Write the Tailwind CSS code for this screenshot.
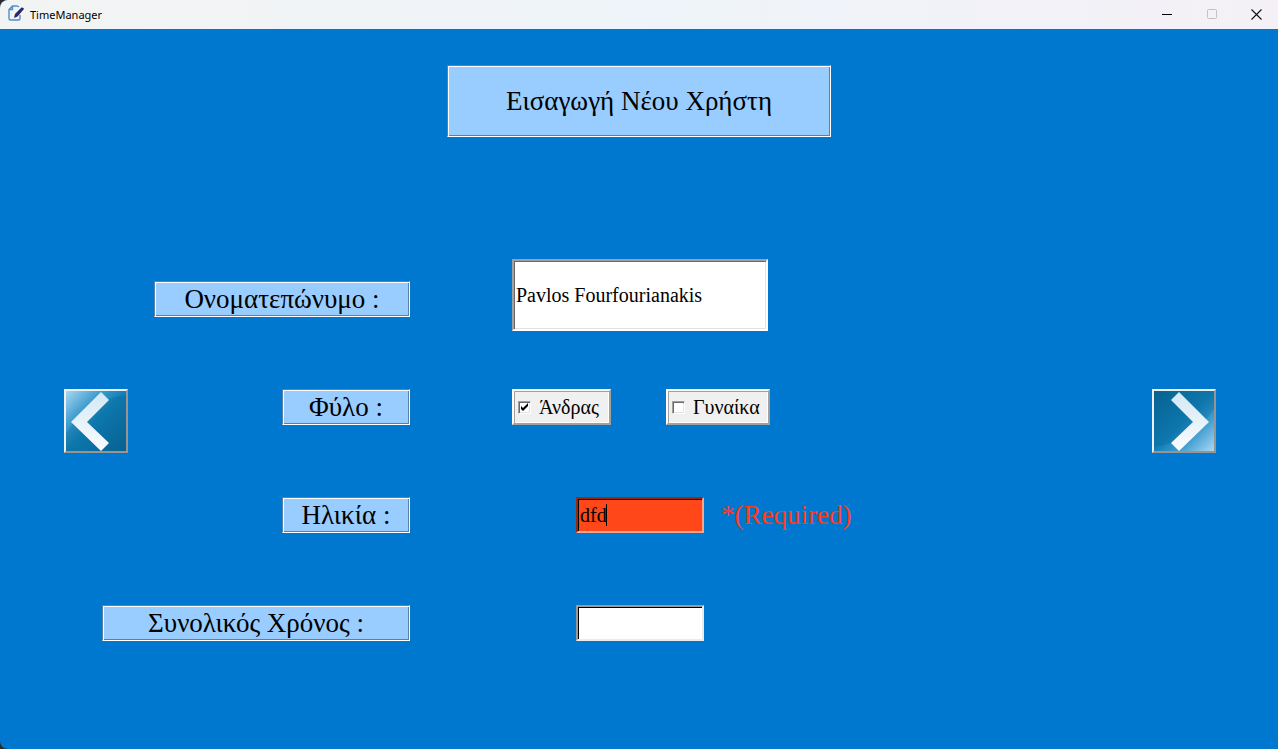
<!DOCTYPE html>
<html lang="el">
<head>
<meta charset="utf-8">
<meta name="viewport" content="width=device-width, initial-scale=1">
<title>TimeManager</title>
<script src="https://cdn.jsdelivr.net/npm/@tailwindcss/browser@4"></script>
</head>
<body class="bg-[#2b2b2b]">
<div class="flex min-h-screen flex-col overflow-hidden rounded-l-lg bg-[#0078d0] font-['Liberation_Serif',serif] text-black">
  <header class="flex h-[29px] items-center bg-linear-to-r from-[#f3f3f3] via-[#eef4f9] to-[#f4f0f6] pl-2 font-['Noto_Sans',sans-serif]">
    <svg class="-mt-1 size-4" viewBox="0 0 16 16" fill="none" aria-hidden="true">
      <path d="M9.500 1H4.500L1 4.500v9Q1 15 2.500 15H10.500Q12 15 12 13.500V10M4.500 1v3.500H1M9.500 1l1.500 1" stroke="#4a90d0" stroke-width="1.400"/>
      <path d="M13.500 2.500Q15.500 2 16 4L9.500 11.500 6 13 7 9Z" fill="#25286b"/>
    </svg>
    <h1 class="ml-[6px] text-[11px] leading-4">TimeManager</h1>
    <div class="ml-auto flex h-[26px]">
      <button type="button" aria-label="Minimize" class="flex w-[46px] items-center justify-center"><svg class="size-[11px]" viewBox="0 0 11 11"><path d="M0 5.500h10" stroke="#000"/></svg></button>
      <button type="button" aria-label="Maximize" disabled class="flex w-[45px] items-center justify-center"><svg class="size-[11px]" viewBox="0 0 11 11"><rect x=".5" y=".5" width="9" height="9" rx="1" fill="none" stroke="#c3c0c6"/></svg></button>
      <button type="button" aria-label="Close" class="flex w-[43px] items-center justify-center"><svg class="size-[11px]" viewBox="0 0 11 11"><path d="M.5.5l10 10M10.500.5l-10 10" stroke="#111" stroke-width="1.100"/></svg></button>
    </div>
  </header>

  <main class="flex flex-1 flex-col pt-9">
    <h2 class="mx-auto flex h-[72px] w-[384px] items-center justify-center border border-t-[#5b7fa5] border-l-[#5b7fa5] border-r-white border-b-white bg-[#99ccff] text-[27px] leading-8 shadow-[inset_1px_1px_#fff,inset_-1px_-1px_#5b7fa5]">Εισαγωγή Νέου Χρήστη</h2>

    <form class="mt-[122px] flex flex-col">
      <div class="grid grid-cols-[410px_1fr] items-start gap-x-[102px]">
        <label for="name" class="mt-[22px] flex h-9 w-64 items-center justify-center justify-self-end border border-t-[#5b7fa5] border-l-[#5b7fa5] border-r-white border-b-white bg-[#99ccff] text-[27px] leading-8 shadow-[inset_1px_1px_#fff,inset_-1px_-1px_#5b7fa5]">Ονοματεπώνυμο :</label>
        <input id="name" type="text" value="Pavlos Fourfourianakis" class="h-[72px] w-64 border-2 border-t-[#a0a0a0] border-l-[#a0a0a0] border-r-white border-b-white bg-white px-[2px] text-[20px] leading-6 shadow-[inset_1px_1px_#696969,inset_-1px_-1px_#e3e3e3] outline-none">
      </div>

      <div class="mt-[58px] grid grid-cols-[410px_1fr] items-start gap-x-[102px]">
        <div class="flex items-start justify-between pl-16">
          <button type="button" aria-label="Previous" class="size-16 border-2 border-t-[#f0f0f0] border-l-[#f0f0f0] border-r-[#9a9490] border-b-[#9a9490]">
            <svg class="size-full" viewBox="0 0 60 60" aria-hidden="true">
              <defs>
                <linearGradient id="tile" x1="0" y1="0" x2="1" y2="1"><stop offset="0" stop-color="#a9d8f5"/><stop offset=".3" stop-color="#3d9bcd"/><stop offset=".5" stop-color="#1280b8"/><stop offset="1" stop-color="#0a6494"/></linearGradient>
                <linearGradient id="arrow" x1="0" y1="0" x2="0" y2="1"><stop offset="0" stop-color="#d3e8f4"/><stop offset="1" stop-color="#fafcff"/></linearGradient>
              </defs>
              <path fill="url(#tile)" d="M0 0h60v60H0z"/>
              <path fill="#005a86" fill-opacity=".25" d="M60 4C40 6 15 18 0 42V60H60z"/>
              <path fill="url(#arrow)" d="M35 1l8 8-22 22 22 21-8 8L5 31z"/>
            </svg>
          </button>
          <span id="gender" class="flex h-9 w-32 items-center justify-center border border-t-[#5b7fa5] border-l-[#5b7fa5] border-r-white border-b-white bg-[#99ccff] text-[27px] leading-8 shadow-[inset_1px_1px_#fff,inset_-1px_-1px_#5b7fa5]">Φύλο :</span>
        </div>
        <div class="flex items-start pr-[62px]" role="group" aria-labelledby="gender">
          <label class="flex h-9 w-[99px] items-center gap-2 border-2 border-t-white border-l-white border-r-[#a0a0a0] border-b-[#a0a0a0] bg-[#f0f0f0] pl-1 text-[20px] leading-6 shadow-[inset_1px_1px_#a0a0a0,inset_-1px_-1px_#fff]">
            <span class="grid">
              <input type="checkbox" checked class="peer col-start-1 row-start-1 size-[13px] appearance-none border border-t-[#a0a0a0] border-l-[#a0a0a0] border-r-white border-b-white bg-white shadow-[inset_1px_1px_#696969,inset_-1px_-1px_#e3e3e3]">
              <svg class="pointer-events-none invisible col-start-1 row-start-1 size-[13px] peer-checked:visible" viewBox="0 0 13 13"><path d="M3 5l2 2 5-5v3L5 10 3 8z" fill="#000"/></svg>
            </span>
            Άνδρας
          </label>
          <label class="ml-[55px] flex h-9 w-[104px] items-center gap-2 border-2 border-t-white border-l-white border-r-[#a0a0a0] border-b-[#a0a0a0] bg-[#f0f0f0] pl-1 text-[20px] leading-6 shadow-[inset_1px_1px_#a0a0a0,inset_-1px_-1px_#fff]">
            <span class="grid">
              <input type="checkbox" class="peer col-start-1 row-start-1 size-[13px] appearance-none border border-t-[#a0a0a0] border-l-[#a0a0a0] border-r-white border-b-white bg-white shadow-[inset_1px_1px_#696969,inset_-1px_-1px_#e3e3e3]">
              <svg class="pointer-events-none invisible col-start-1 row-start-1 size-[13px] peer-checked:visible" viewBox="0 0 13 13"><path d="M3 5l2 2 5-5v3L5 10 3 8z" fill="#000"/></svg>
            </span>
            Γυναίκα
          </label>
          <button type="button" aria-label="Next" class="ml-auto size-16 border-2 border-t-[#f0f0f0] border-l-[#f0f0f0] border-r-[#9a9490] border-b-[#9a9490]">
            <svg class="size-full" viewBox="0 0 60 60" aria-hidden="true">
              <g transform="rotate(180 30 30)">
                <path fill="url(#tile)" d="M0 0h60v60H0z"/>
                <path fill="#005a86" fill-opacity=".25" d="M60 4C40 6 15 18 0 42V60H60z"/>
              </g>
              <path fill="url(#arrow)" d="M25 1l-8 8 22 22-22 21 8 8 30-29z"/>
            </svg>
          </button>
        </div>
      </div>

      <div class="mt-11 grid grid-cols-[410px_1fr] items-center gap-x-[102px]">
        <label for="age" class="flex h-9 w-32 items-center justify-center justify-self-end border border-t-[#5b7fa5] border-l-[#5b7fa5] border-r-white border-b-white bg-[#99ccff] text-[27px] leading-8 shadow-[inset_1px_1px_#fff,inset_-1px_-1px_#5b7fa5]">Ηλικία :</label>
        <div class="flex items-center pl-16">
          <div class="relative">
            <input id="age" type="text" value="dfd" aria-invalid="true" aria-describedby="age-error" class="block h-9 w-32 border-2 border-t-[#99290d] border-l-[#99290d] border-r-[#ffa38c] border-b-[#ffa38c] bg-[#ff4719] px-[2px] text-[20px] leading-6 shadow-[inset_1px_1px_#000] outline-none">
            <span class="absolute top-[7px] left-[30px] h-[22px] w-px bg-black"></span>
          </div>
          <p id="age-error" class="ml-[17px] text-[27px] leading-8 text-[#ff3b14]">*(Required)</p>
        </div>
      </div>

      <div class="mt-[72px] grid grid-cols-[410px_1fr] items-center gap-x-[102px]">
        <label for="total" class="flex h-9 w-[308px] items-center justify-center justify-self-end border border-t-[#5b7fa5] border-l-[#5b7fa5] border-r-white border-b-white bg-[#99ccff] text-[27px] leading-8 shadow-[inset_1px_1px_#fff,inset_-1px_-1px_#5b7fa5]">Συνολικός Χρόνος :</label>
        <div class="pl-16">
          <input id="total" type="text" class="block h-9 w-32 border-2 border-t-[#999] border-l-[#999] border-r-[#ebebeb] border-b-[#ebebeb] bg-white px-[2px] text-[20px] leading-6 shadow-[inset_1px_1px_#000] outline-none">
        </div>
      </div>
    </form>
  </main>
</div>
</body>
</html>
